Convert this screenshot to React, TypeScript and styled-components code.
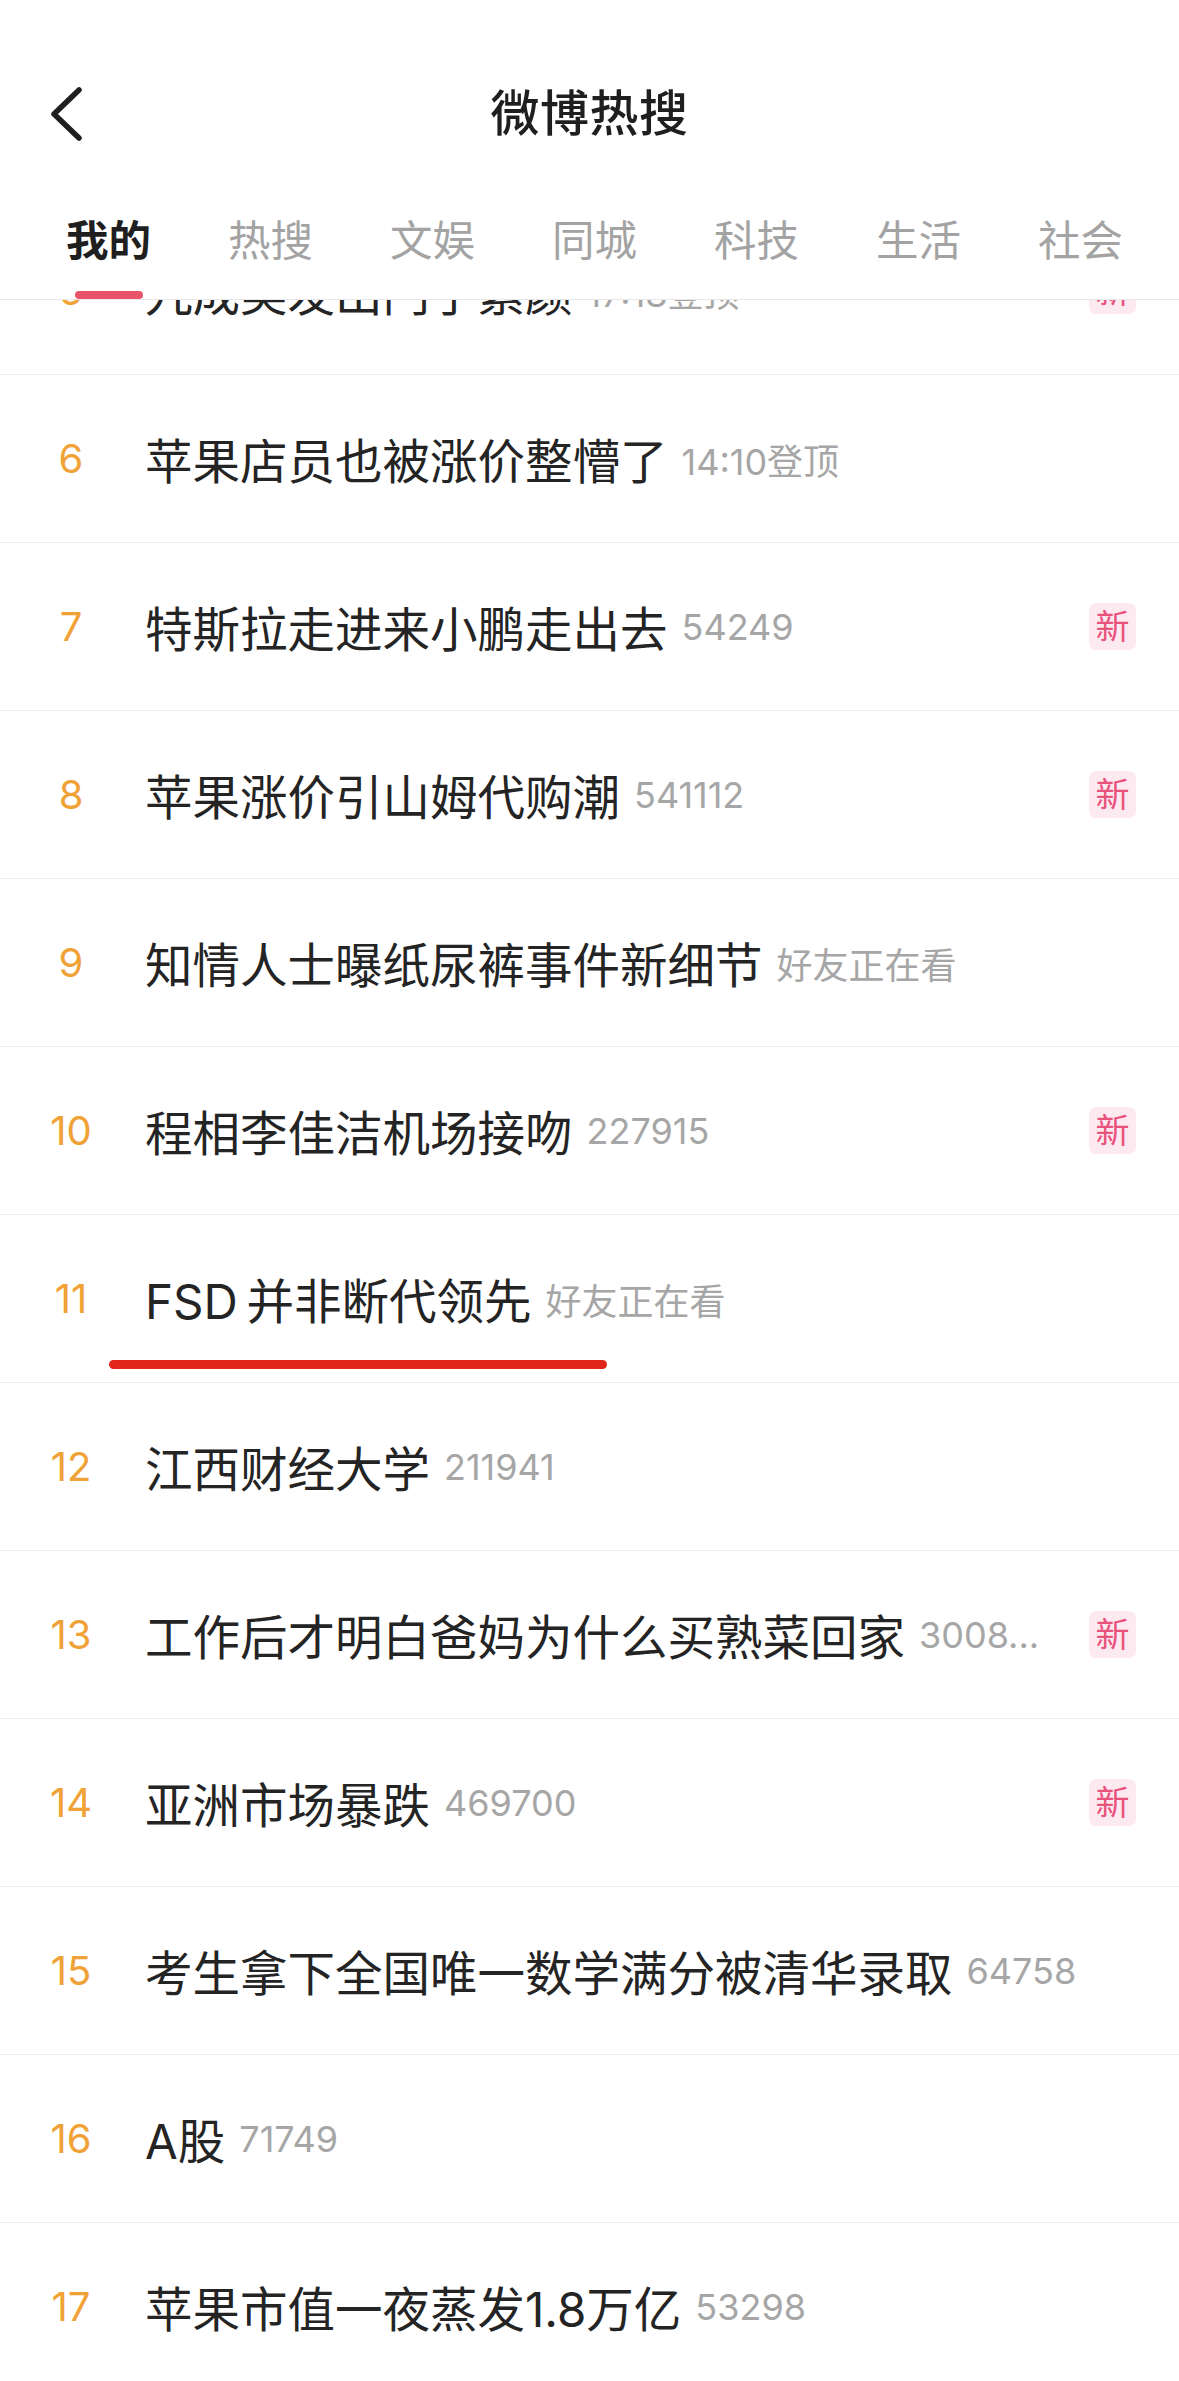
import styled, { createGlobalStyle } from "styled-components";

const GlobalStyle = createGlobalStyle`
  html, body {
    margin: 0;
    padding: 0;
    background: #ffffff;
    overflow: hidden;
  }
  body {
    font-family: Inter, "Noto Sans CJK SC", sans-serif;
    -webkit-font-smoothing: antialiased;
  }
`;

type HotItem = {
  rank: number;
  title: string;
  meta: string;
  isNew?: boolean;
  marked?: boolean;
};

const TABS = ["我的", "热搜", "文娱", "同城", "科技", "生活", "社会"];

const HOT_LIST: HotItem[] = [
  { rank: 5, title: "九成美发出门了素颜", meta: "17:18登顶", isNew: true },
  { rank: 6, title: "苹果店员也被涨价整懵了", meta: "14:10登顶" },
  { rank: 7, title: "特斯拉走进来小鹏走出去", meta: "54249", isNew: true },
  { rank: 8, title: "苹果涨价引山姆代购潮", meta: "541112", isNew: true },
  { rank: 9, title: "知情人士曝纸尿裤事件新细节", meta: "好友正在看" },
  { rank: 10, title: "程相李佳洁机场接吻", meta: "227915", isNew: true },
  { rank: 11, title: "FSD\u2009并非断代领先", meta: "好友正在看", marked: true },
  { rank: 12, title: "江西财经大学", meta: "211941" },
  { rank: 13, title: "工作后才明白爸妈为什么买熟菜回家", meta: "3008...", isNew: true },
  { rank: 14, title: "亚洲市场暴跌", meta: "469700", isNew: true },
  { rank: 15, title: "考生拿下全国唯一数学满分被清华录取", meta: "64758" },
  { rank: 16, title: "A股", meta: "71749" },
  { rank: 17, title: "苹果市值一夜蒸发1.8万亿", meta: "53298" },
];

export default function App() {
  return (
    <Page>
      <GlobalStyle />
      <Header>
        <NavBar>
          <BackButton aria-label="返回">
            <svg width="36" height="56" viewBox="0 0 36 56" fill="none">
              <path
                d="M31 4 L6 28 L31 52"
                stroke="#1f1f1f"
                strokeWidth="5.5"
                strokeLinecap="round"
                strokeLinejoin="round"
              />
            </svg>
          </BackButton>
          <Title>微博热搜</Title>
          <span />
        </NavBar>
        <TabBar>
          {TABS.map((tab, i) => (
            <Tab key={tab} $active={i === 0}>
              {tab}
              <TabIndicator $active={i === 0} />
            </Tab>
          ))}
        </TabBar>
      </Header>
      <ListViewport>
        <List>
          {HOT_LIST.map((item) => (
            <Row key={item.rank}>
              <Rank>{item.rank}</Rank>
              <RowTitle>{item.title}</RowTitle>
              <Meta>{item.meta}</Meta>
              {item.isNew && <NewBadge>新</NewBadge>}
              {item.marked && <MarkLine />}
            </Row>
          ))}
        </List>
      </ListViewport>
    </Page>
  );
}

const Page = styled.div`
  width: 1179px;
  height: 2381px;
  overflow: hidden;
  display: flex;
  flex-direction: column;
  background: #ffffff;
`;

const Header = styled.header`
  flex-shrink: 0;
  background: #ffffff;
  border-bottom: 1px solid #e8e8e8;
  position: relative;
  z-index: 2;
`;

const NavBar = styled.div`
  height: 212px;
  padding-top: 8px;
  display: grid;
  grid-template-columns: 1fr auto 1fr;
  align-items: center;
`;

const BackButton = styled.div`
  display: flex;
  align-items: center;
  padding-left: 48px;
`;

const Title = styled.h1`
  margin: 0;
  font-size: 49px;
  font-weight: 500;
  color: #1f1f1f;
  line-height: 1.2;
  letter-spacing: 0.5px;
`;

const TabBar = styled.nav`
  display: flex;
  gap: 77px;
  padding-left: 66px;
  height: 79px;
`;

const Tab = styled.div<{ $active: boolean }>`
  display: flex;
  flex-direction: column;
  align-items: center;
  font-size: 42.5px;
  line-height: 42px;
  font-weight: ${(p) => (p.$active ? 700 : 400)};
  color: ${(p) => (p.$active ? "#1f1f1f" : "#a3a3a3")};
`;

const TabIndicator = styled.span<{ $active: boolean }>`
  margin-top: 29px;
  width: 68px;
  height: 8px;
  border-radius: 4px;
  background: ${(p) => (p.$active ? "#ea5468" : "transparent")};
`;

const ListViewport = styled.div`
  flex: 1;
  overflow: hidden;
`;

const List = styled.ul`
  list-style: none;
  margin: -93px 0 0;
  padding: 0;
`;

const Row = styled.li`
  position: relative;
  height: 167px;
  border-bottom: 1px solid #efefef;
  display: flex;
  align-items: center;
  padding: 0 43px 0 36px;
`;

const Rank = styled.span`
  width: 70px;
  flex-shrink: 0;
  text-align: center;
  font-size: 40px;
  color: #f0a236;
`;

const RowTitle = styled.span`
  margin-left: 39px;
  font-size: 47.5px;
  color: #242424;
  white-space: nowrap;
  flex-shrink: 0;
`;

const Meta = styled.span`
  margin-left: 14px;
  font-size: 36px;
  color: #a6a6a6;
  white-space: nowrap;
  flex: 1;
  min-width: 0;
  overflow: hidden;
`;

const NewBadge = styled.span`
  width: 47px;
  height: 47px;
  flex-shrink: 0;
  border-radius: 7px;
  background: #fde9f0;
  color: #e9527d;
  font-size: 34px;
  line-height: 47px;
  text-align: center;
`;

const MarkLine = styled.span`
  position: absolute;
  left: 109px;
  bottom: 13px;
  width: 498px;
  height: 9px;
  border-radius: 5px;
  background: #e1261a;
`;
